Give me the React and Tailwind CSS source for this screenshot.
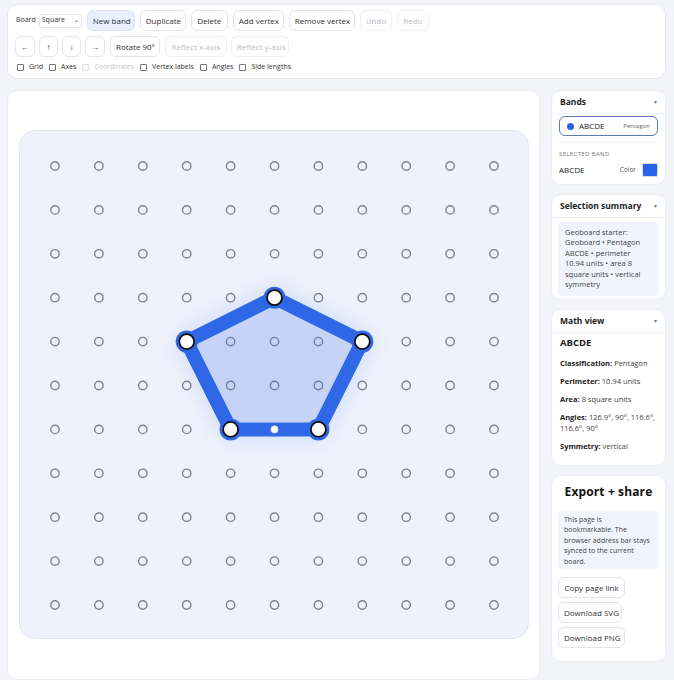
import React from "react";

const S = 43.9;
const O = 35;
const p = (c, r) => [O + c * S, O + r * S];

const verts = [p(5, 3), p(7, 4), p(6, 6), p(4, 6), p(3, 4)];

function Btn({ children, active, disabled, className = "" }) {
  let tone = "bg-white border-[#e3e5ea] text-[#333]";
  if (active) tone = "bg-[#e9effc] border-[#dbe4f7] text-[#2b3340]";
  if (disabled) tone = "bg-white border-[#f0f1f4] text-[#b9bdc5]";
  return (
    <button
      className={`h-[21px] px-[5px] rounded-[6px] border text-[8px] leading-none whitespace-nowrap ${tone} ${className}`}
    >
      {children}
    </button>
  );
}

function Check({ label, disabled }) {
  return (
    <label className={`flex items-center gap-[5px] ${disabled ? "text-[#c3c6cc]" : "text-[#333]"}`}>
      <span className={`w-[7px] h-[7px] border rounded-[1px] ${disabled ? "border-[#dcdee3]" : "border-[#777]"}`} />
      {label}
    </label>
  );
}

function Board() {
  const pegs = [];
  for (let r = 0; r < 11; r++) {
    for (let c = 0; c < 11; c++) {
      const [x, y] = p(c, r);
      pegs.push(<circle key={`${r}-${c}`} cx={x} cy={y} r="4.2" fill="none" stroke="#80848c" strokeWidth="1.4" />);
    }
  }
  const pts = verts.map((v) => v.join(",")).join(" ");
  const mid = p(5, 6);
  return (
    <svg viewBox="0 0 509 508" width="509" height="508" className="block">
      <defs>
        <filter id="glow" x="-50%" y="-50%" width="200%" height="200%">
          <feGaussianBlur stdDeviation="10" />
        </filter>
      </defs>
      {pegs}
      <polygon points={pts} fill="#2f66e8" opacity="0.14" filter="url(#glow)" stroke="#2f66e8" strokeWidth="22" strokeLinejoin="round" />
      <polygon points={pts} fill="#4a78ea" fillOpacity="0.1" />
      <polygon points={pts} fill="none" stroke="#2f68e6" strokeWidth="14" strokeLinejoin="round" />
      <circle cx={mid[0]} cy={mid[1]} r="3.6" fill="#fff" stroke="#c9d5f5" strokeWidth="1" />
      {verts.map(([x, y], i) => (
        <g key={i}>
          <circle cx={x} cy={y} r="11" fill="#2f68e6" />
          <circle cx={x} cy={y} r="7.5" fill="#fff" stroke="#111" strokeWidth="1.8" />
        </g>
      ))}
    </svg>
  );
}

function CardHead({ title }) {
  return (
    <div className="flex items-center justify-between px-[8px] h-[23px] border-b border-[#eef0f3]">
      <span className="font-bold text-[8.5px] text-[#222]">{title}</span>
      <span className="text-[6px] text-[#777]">▾</span>
    </div>
  );
}

export default function App() {
  return (
    <div
      className="min-h-[680px] bg-[#f3f4f7] px-[7px] pt-[4px] text-[#333]"
      style={{ fontFamily: '"Open Sans", "Noto Sans", Arial, sans-serif' }}
    >
      {/* Toolbar */}
      <div className="w-[659px] h-[75px] bg-white border border-[#e6e8ec] rounded-[10px] px-[7px] pt-[5px] flex flex-col gap-[5px]">
        <div className="flex items-center gap-[5px]">
          <span className="text-[7px] text-[#333] ml-[1px]">Board</span>
          <div className="flex items-center justify-between w-[43px] h-[14px] border border-[#e3e5ea] rounded-[3px] px-[2px] text-[7px] -ml-[2px]">
            <span>Square</span>
            <span className="text-[6px]">⌄</span>
          </div>
          <Btn active className="w-[48px]">New band</Btn>
          <Btn className="w-[46px]">Duplicate</Btn>
          <Btn className="w-[37px]">Delete</Btn>
          <Btn className="w-[51px]">Add vertex</Btn>
          <Btn className="w-[66px]">Remove vertex</Btn>
          <Btn disabled className="w-[32px]">Undo</Btn>
          <Btn disabled className="w-[32px]">Redo</Btn>
        </div>
        <div className="flex items-center gap-[4px]">
          <Btn className="w-[20px] px-0">←</Btn>
          <Btn className="w-[19px] px-0">↑</Btn>
          <Btn className="w-[19px] px-0">↓</Btn>
          <Btn className="w-[20px] px-0">→</Btn>
          <Btn className="w-[50px] ml-[1px]">Rotate 90°</Btn>
          <Btn disabled className="w-[62px] ml-[1px]">Reflect x-axis</Btn>
          <Btn disabled className="w-[58px]">Reflect y-axis</Btn>
        </div>
        <div className="flex items-center gap-[6px] text-[7px] pl-[2px]">
          <Check label="Grid" />
          <Check label="Axes" />
          <Check label="Coordinates" disabled />
          <Check label="Vertex labels" />
          <Check label="Angles" />
          <Check label="Side lengths" />
        </div>
      </div>

      {/* Main */}
      <div className="grid grid-cols-[533px_115px] gap-[11px] mt-[11px]">
        <div className="bg-white border border-[#eceef1] rounded-[10px] pt-[39px] pb-[40px] px-[11px]">
          <div className="w-[510px] h-[509px] bg-[#eff2fb] border border-[#e3e6ee] rounded-[16px] overflow-hidden">
            <Board />
          </div>
        </div>

        <div className="flex flex-col gap-[9px]">
          <div className="bg-white border border-[#eceef1] rounded-[10px] pb-[7px]">
            <CardHead title="Bands" />
            <div className="px-[7px] pt-[2px]">
              <div className="h-[20px] border border-[#5b7bb8] rounded-[6px] flex items-center px-[7px] gap-[5px]">
                <span className="w-[7px] h-[7px] rounded-full bg-[#2563eb]" />
                <span className="text-[8px] text-[#222]">ABCDE</span>
                <span className="ml-auto text-[6px] text-[#666]">Pentagon</span>
              </div>
              <div className="border-t border-[#f0f1f4] mt-[6px] pt-[7px] text-[6px] tracking-[0.06em] text-[#777]">SELECTED BAND</div>
              <div className="flex items-center mt-[4px]">
                <span className="text-[8px] text-[#222]">ABCDE</span>
                <span className="ml-auto text-[6.5px] text-[#555] mr-[6px]">Color</span>
                <span className="w-[16px] h-[14px] bg-[#2563eb] rounded-[2px] border border-[#d8dbe1]" />
              </div>
            </div>
          </div>

          <div className="bg-white border border-[#eceef1] rounded-[10px] pb-[3px]">
            <CardHead title="Selection summary" />
            <div className="px-[6px] pt-[4px]">
              <div className="bg-[#f1f4fc] rounded-[4px] px-[7px] pt-[5px] pb-[7px] text-[7.5px] leading-[10.4px] text-[#444] whitespace-nowrap">
                Geoboard starter:<br />Geoboard • Pentagon<br />ABCDE • perimeter<br />10.94 units • area 8<br />square units • vertical<br />symmetry
              </div>
            </div>
          </div>

          <div className="bg-white border border-[#eceef1] rounded-[10px] pb-[12px]">
            <CardHead title="Math view" />
            <div className="px-[8px] text-[7.5px] text-[#444] whitespace-nowrap">
              <div className="font-bold text-[9.5px] text-[#222] mt-[3px]">ABCDE</div>
              <div className="mt-[7px]"><b className="text-[#222]">Classification:</b> Pentagon</div>
              <div className="mt-[7px]"><b className="text-[#222]">Perimeter:</b> 10.94 units</div>
              <div className="mt-[7px]"><b className="text-[#222]">Area:</b> 8 square units</div>
              <div className="mt-[7px] leading-[11px]"><b className="text-[#222]">Angles:</b> 126.9°, 90°, 116.6°,<br />116.6°, 90°</div>
              <div className="mt-[7px]"><b className="text-[#222]">Symmetry:</b> vertical</div>
            </div>
          </div>

          <div className="bg-white border border-[#eceef1] rounded-[10px] px-[6px] pt-[7px] pb-[13px]">
            <div className="text-center font-bold text-[12px] text-[#111] tracking-[0.01em]">Export + share</div>
            <div className="bg-[#f1f4fc] rounded-[4px] mt-[10px] px-[6px] pt-[4px] pb-[2px] text-[7px] leading-[10.5px] text-[#444] whitespace-nowrap">
              This page is<br />bookmarkable. The<br />browser address bar stays<br />synced to the current<br />board.
            </div>
            <div className="flex flex-col items-start gap-[4px] mt-[8px]">
              <Btn className="w-[67px] h-[20px]">Copy page link</Btn>
              <Btn className="w-[64px] h-[20px]">Download SVG</Btn>
              <Btn className="w-[67px] h-[20px]">Download PNG</Btn>
            </div>
          </div>
        </div>
      </div>
    </div>
  );
}
